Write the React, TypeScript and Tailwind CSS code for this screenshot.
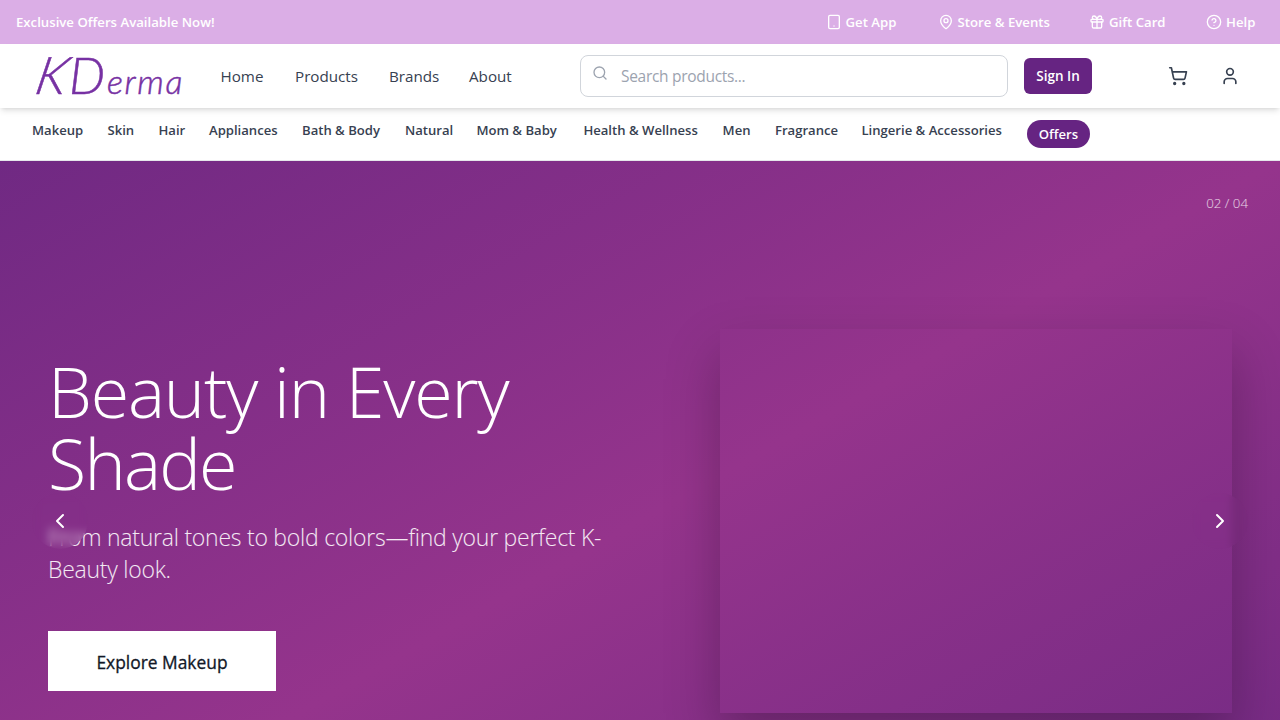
import React from "react";
import {
  ChevronLeft,
  ChevronRight,
  CircleHelp,
  Gift,
  MapPin,
  Search,
  ShoppingCart,
  Tablet,
  User,
} from "lucide-react";

const topLinks = [
  { label: "Get App", Icon: Tablet, width: "w-[72px]" },
  { label: "Store & Events", Icon: MapPin, width: "w-[111.5px]" },
  { label: "Gift Card", Icon: Gift, width: "w-[77px]" },
  { label: "Help", Icon: CircleHelp, width: "w-[50px]" },
];

const mainLinks = [
  { label: "Home", width: "w-[42.5px]" },
  { label: "Products", width: "w-[62px]" },
  { label: "Brands", width: "w-[48px]" },
  { label: "About", width: "w-[44px]" },
];

const categories = [
  { label: "Makeup", width: "w-[51.5px]" },
  { label: "Skin", width: "w-[27px]" },
  { label: "Hair", width: "w-[26.5px]" },
  { label: "Appliances", width: "w-[69px]" },
  { label: "Bath & Body", width: "w-[79px]" },
  { label: "Natural", width: "w-[47.4px]" },
  { label: "Mom & Baby", width: "w-[83px]" },
  { label: "Health & Wellness", width: "w-[115.2px]" },
  { label: "Men", width: "w-[28.4px]" },
  { label: "Fragrance", width: "w-[62.5px]" },
  { label: "Lingerie & Accessories", width: "w-[141.5px]" },
];

function TopBar() {
  return (
    <div className="flex h-11 items-center justify-between bg-[#dbaee6] pl-4 pr-6 text-[13.2px] font-semibold text-white">
      <span className="whitespace-nowrap pt-px">Exclusive Offers Available Now!</span>
      <div className="flex items-center gap-10">
        {topLinks.map(({ label, Icon, width }) => (
          <a key={label} className={`flex items-center gap-1 whitespace-nowrap ${width}`}>
            <Icon className="size-4 shrink-0" strokeWidth={2} />
            <span className="pt-px">{label}</span>
          </a>
        ))}
      </div>
    </div>
  );
}

function Logo() {
  return (
    <div className="flex w-[156px] items-baseline whitespace-nowrap pb-1 font-['Lato','Liberation_Sans',sans-serif] font-light italic leading-none text-[#7731a3] [-webkit-text-stroke:0.5px_#7731a3]">
      <span className="w-[37px] origin-bottom-left -skew-x-12 text-[52px]">K</span>
      <span className="w-[38px] text-[51px]">D</span>
      <span className="text-[34px] tracking-[1.6px]">erma</span>
    </div>
  );
}

function Header() {
  return (
    <header className="relative z-10 flex h-16 items-center bg-white px-8 shadow-md">
      <Logo />
      <nav className="ml-[32.5px] flex gap-8 text-[15.2px] text-[#374151]">
        {mainLinks.map(({ label, width }) => (
          <a key={label} className={`whitespace-nowrap ${width}`}>{label}</a>
        ))}
      </nav>
      <div className="ml-[67px] flex h-[42px] w-[428px] rounded-lg border border-[#d1d5db] pl-[11px] text-[#9ca3af]">
        <Search className="mt-[9px] size-4" />
        <span className="ml-[13px] self-center pt-0.5 text-[15.5px] tracking-[-0.3px]">Search products...</span>
      </div>
      <button className="ml-4 h-9 w-[68px] whitespace-nowrap rounded-md bg-[#662482] pt-px text-[13.5px] font-semibold text-white">
        Sign In
      </button>
      <div className="ml-auto flex gap-8 pr-2 text-[#374151]">
        <ShoppingCart className="size-5" />
        <User className="size-5" />
      </div>
    </header>
  );
}

function CategoryBar() {
  return (
    <nav className="flex h-[53px] items-start gap-6 border-b border-gray-200 bg-white px-8 pt-3 text-[13.1px] font-semibold leading-5 text-[#374151]">
      {categories.map(({ label, width }) => (
        <a key={label} className={`whitespace-nowrap ${width}`}>{label}</a>
      ))}
      <a className="h-7 w-[63px] rounded-full bg-[#662482] text-center leading-7 text-white">Offers</a>
    </nav>
  );
}

function Hero() {
  return (
    <section className="relative h-[720px] bg-[linear-gradient(to_bottom_right,#702983,#95348c_50%,#702983)] text-white">
      <div className="grid h-full grid-cols-[1fr_512px] items-center gap-16 px-12">
        <div className="pt-[2px]">
          <h1 className="pt-[2px] text-[70px] font-light leading-[72px] tracking-[-1.2px]">
            <span className="block">Beauty in Every</span>
            <span className="block tracking-[-1.8px]">Shade</span>
          </h1>
          <p className="mt-[22px] whitespace-nowrap text-[23px] font-light leading-8 tracking-[-0.25px] text-white/90">
            From natural tones to bold colors—find your perfect K-
            <br />
            Beauty look.
          </p>
          <button className="mt-[46px] h-[60px] w-[228px] bg-white pt-0.5 text-[17.4px] font-medium text-[#111827] [-webkit-text-stroke:0.3px_#111827]">
            Explore Makeup
          </button>
        </div>
        <div className="aspect-[4/3] w-full shadow-[0_25px_50px_rgba(0,0,0,0.25)]" />
      </div>
      <span className="absolute right-8 top-8 text-[13.3px] font-light leading-5 text-white/80">02 / 04</span>
      <button className="absolute left-8 top-1/2 flex size-14 -translate-y-1/2 items-center justify-center rounded-full backdrop-blur-[4px]">
        <ChevronLeft className="size-6" />
      </button>
      <button className="absolute right-8 top-1/2 flex size-14 -translate-y-1/2 items-center justify-center rounded-full backdrop-blur-[4px]">
        <ChevronRight className="size-6" />
      </button>
    </section>
  );
}

export default function App() {
  return (
    <div className="h-screen overflow-hidden bg-white font-['Open_Sans','Noto_Sans',sans-serif]">
      <TopBar />
      <Header />
      <CategoryBar />
      <Hero />
    </div>
  );
}
